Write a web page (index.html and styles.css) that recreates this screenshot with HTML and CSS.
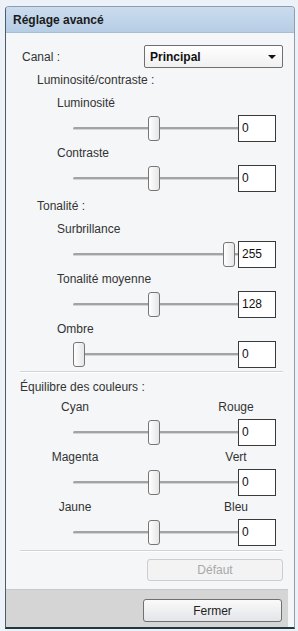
FILE: index.html
```html
<!DOCTYPE html>
<html lang="fr">
<head>
  <meta charset="UTF-8" />
  <title>Réglage avancé</title>
  <link rel="stylesheet" href="styles.css">
</head>
<body>
  <div class="window">
    <div class="titlebar">Réglage avancé</div>
    <div class="panel">
      <div class="canal-row">
        <span>Canal :</span>
        <div class="combo"><span>Principal</span><span class="arrow"></span></div>
      </div>

      <div class="section-title">Luminosité/contraste :</div>
      <div class="glabel first">Luminosité</div>
      <div class="slider-row">
        <div class="track"><div class="thumb" style="left: 75px"></div></div>
        <div class="value">0</div>
      </div>
      <div class="glabel">Contraste</div>
      <div class="slider-row">
        <div class="track"><div class="thumb" style="left: 75px"></div></div>
        <div class="value">0</div>
      </div>

      <div class="section-title">Tonalité :</div>
      <div class="glabel first">Surbrillance</div>
      <div class="slider-row">
        <div class="track"><div class="thumb" style="left: 150px"></div></div>
        <div class="value">255</div>
      </div>
      <div class="glabel">Tonalité moyenne</div>
      <div class="slider-row">
        <div class="track"><div class="thumb" style="left: 75px"></div></div>
        <div class="value">128</div>
      </div>
      <div class="glabel">Ombre</div>
      <div class="slider-row">
        <div class="track"><div class="thumb" style="left: 0px"></div></div>
        <div class="value">0</div>
      </div>

      <div class="sep"></div>

      <div class="section-title balance">Équilibre des couleurs :</div>
      <div class="pair first"><span>Cyan</span><span>Rouge</span></div>
      <div class="slider-row">
        <div class="track"><div class="thumb" style="left: 75px"></div></div>
        <div class="value">0</div>
      </div>
      <div class="pair"><span>Magenta</span><span>Vert</span></div>
      <div class="slider-row">
        <div class="track"><div class="thumb" style="left: 75px"></div></div>
        <div class="value">0</div>
      </div>
      <div class="pair"><span>Jaune</span><span>Bleu</span></div>
      <div class="slider-row">
        <div class="track"><div class="thumb" style="left: 75px"></div></div>
        <div class="value">0</div>
      </div>

      <div class="sep last"></div>
      <button class="btn default" disabled>Défaut</button>
    </div>
    <div class="footer">
      <button class="btn close">Fermer</button>
    </div>
  </div>
</body>
</html>
```

FILE: styles.css
```css
* { box-sizing: border-box; }
html, body { margin: 0; height: 100%; }
body {
  background: #edf2f8;
  font-family: "Liberation Sans", Arial, sans-serif;
  font-size: 12px;
  color: #333;
  overflow: hidden;
}
.window {
  display: flex;
  flex-direction: column;
  width: 290px;
  height: 623px;
  margin: 6px 0 0 5px;
  background: #f5f6f8;
  border: 1px solid #8f9dab;
  border-left-color: #4d5e68;
  border-bottom: 2px solid #1c3a3f;
  border-radius: 4px 4px 0 0;
}
.titlebar {
  height: 26px;
  line-height: 26px;
  padding-left: 7px;
  font-weight: bold;
  color: #1b1b1b;
  background: linear-gradient(#cadcef, #b7cde5);
  border-bottom: 1px solid #a9bdd2;
  border-radius: 3px 3px 0 0;
}
.panel {
  flex: 1;
  display: flex;
  flex-direction: column;
  padding: 12px 11px 0 16px;
}
.canal-row {
  display: flex;
  justify-content: space-between;
  align-items: center;
  height: 23px;
}
.combo {
  display: flex;
  justify-content: space-between;
  align-items: center;
  width: 139px;
  height: 23px;
  padding: 0 6px 0 5px;
  border: 1px solid #6f6f6f;
  border-radius: 2px;
  background: linear-gradient(#ffffff, #f0f0f0);
  font-weight: bold;
  color: #111;
}
.arrow {
  width: 0;
  height: 0;
  border-left: 4px solid transparent;
  border-right: 4px solid transparent;
  border-top: 4px solid #111;
}
.section-title {
  margin: 5px 0 0 15px;
  line-height: 14px;
}
.section-title.balance { margin: 7px 0 0 -2px; }
.slider-row + .section-title { margin-top: 7px; }
.glabel {
  margin: 4px 0 0 35px;
  line-height: 14px;
}
.glabel.first { margin-top: 9px; }
.pair {
  display: flex;
  justify-content: space-between;
  width: 221px;
  margin: 4px 0 0 23px;
  line-height: 14px;
}
.pair.first { margin-top: 6px; }
.pair span { width: 60px; text-align: center; }
.slider-row {
  display: flex;
  align-items: center;
  width: 203px;
  height: 27px;
  margin: 5px 0 0 51px;
}
.track {
  position: relative;
  flex: 1;
  height: 3px;
  background: #a3a3a3;
  border-bottom: 1px solid #d4d4d4;
  border-radius: 2px 0 0 2px;
}
.thumb {
  position: absolute;
  top: -11px;
  width: 12px;
  height: 25px;
  border: 1px solid #767676;
  border-radius: 3px;
  background: linear-gradient(90deg, #ffffff, #e6e6e6);
}
.value {
  width: 38px;
  height: 27px;
  line-height: 25px;
  padding-left: 3px;
  border: 1px solid #3a3a3a;
  background: #fff;
  color: #111;
}
.sep {
  height: 2px;
  margin: 3px 0 0 -2px;
  border-top: 1px solid #d2d3d6;
  border-bottom: 1px solid #ffffff;
}
.sep.last { margin-top: 4px; }
.btn {
  font-family: inherit;
  font-size: 12px;
  border-radius: 3px;
  padding: 0;
}
.default {
  align-self: flex-end;
  width: 136px;
  height: 22px;
  margin-top: 7px;
  border: 1px solid #cdcdcd;
  background: #f3f3f3;
  color: #a8a8a8;
}
.footer {
  display: flex;
  justify-content: flex-end;
  height: 39px;
  margin: 8px 6px 0 0;
  padding: 9px 6px 0 0;
  background: #d5d5d6;
  border-top: 1px solid #c8c8c8;
}
.close {
  width: 139px;
  height: 23px;
  border: 1px solid #707070;
  background: linear-gradient(#fafafa, #e4e5e9);
  color: #222;
}
```
